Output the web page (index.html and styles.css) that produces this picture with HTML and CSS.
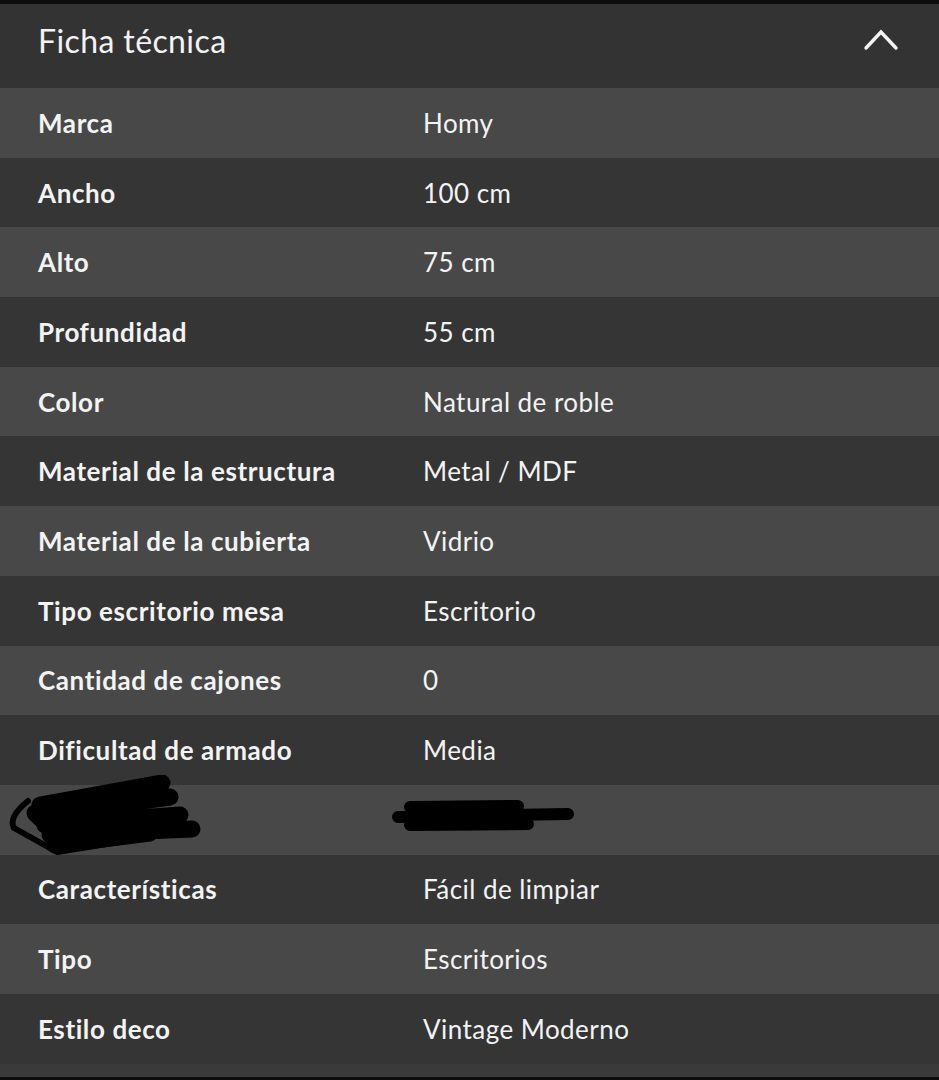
FILE: index.html
```html
<!DOCTYPE html>
<html lang="es">
<head>
<meta charset="utf-8">
<title>Ficha técnica</title>
<link rel="stylesheet" href="styles.css">
</head>
<body>
<div class="page">
  <div class="header">
    <h2 class="title">Ficha técnica</h2>
    <svg class="chev" width="36" height="24" viewBox="0 0 36 24"><path d="M3 21 L18 5 L33 21" fill="none" stroke="#f4f4f4" stroke-width="3.4" stroke-linecap="round" stroke-linejoin="miter"/></svg>
  </div>
  <div class="table">
    <div class="row light"><span class="k">Marca</span><span class="v">Homy</span></div>
    <div class="row dark"><span class="k">Ancho</span><span class="v">100 cm</span></div>
    <div class="row light"><span class="k">Alto</span><span class="v">75 cm</span></div>
    <div class="row dark"><span class="k">Profundidad</span><span class="v">55 cm</span></div>
    <div class="row light"><span class="k">Color</span><span class="v">Natural de roble</span></div>
    <div class="row dark"><span class="k">Material de la estructura</span><span class="v">Metal / MDF</span></div>
    <div class="row light"><span class="k">Material de la cubierta</span><span class="v">Vidrio</span></div>
    <div class="row dark"><span class="k">Tipo escritorio mesa</span><span class="v">Escritorio</span></div>
    <div class="row light"><span class="k">Cantidad de cajones</span><span class="v">0</span></div>
    <div class="row dark"><span class="k">Dificultad de armado</span><span class="v">Media</span></div>
    <div class="row light redacted">
      <svg class="scrib-l" width="210" height="90" viewBox="0 0 210 90"><path d="M40 30 L162 8 M40 40 L170 22 M45 50 L180 40 M50 60 L192 54 M55 70 L150 58 M35 38 L60 62" fill="none" stroke="#000" stroke-width="17" stroke-linecap="round"/><path d="M28 26 Q8 42 14 53 L57 77 L150 62" fill="none" stroke="#000" stroke-width="6" stroke-linecap="round" stroke-linejoin="round"/></svg>
      <svg class="scrib-r" width="200" height="40" viewBox="0 0 200 40"><path d="M22 10 L130 9 M10 20 L180 17 M22 28 L140 27" fill="none" stroke="#000" stroke-width="12" stroke-linecap="round"/></svg>
    </div>
    <div class="row dark"><span class="k">Características</span><span class="v">Fácil de limpiar</span></div>
    <div class="row light"><span class="k">Tipo</span><span class="v">Escritorios</span></div>
    <div class="row dark"><span class="k">Estilo deco</span><span class="v">Vintage Moderno</span></div>
  </div>
  <div class="tail"></div>
</div>
</body>
</html>
```
FILE: styles.css
```css
html, body {
  margin: 0;
  padding: 0;
  background: #0c0c0c;
}
.page {
  width: 939px;
  height: 1080px;
  padding-top: 4px;
  box-sizing: border-box;
  font-family: Lato, "Open Sans", sans-serif;
  color: #f3f3f3;
  display: flex;
  flex-direction: column;
}
.header {
  height: 84px;
  background: #333333;
  display: flex;
  align-items: center;
  justify-content: space-between;
  padding: 0 38px 0 38px;
  box-sizing: border-box;
}
.title {
  margin: 0;
  font-weight: 400;
  font-size: 32px;
  letter-spacing: 0.4px;
  padding-bottom: 12px;
}
.chev {
  display: block;
  margin-bottom: 14px;
  margin-right: 2px;
}
.table {
  display: flex;
  flex-direction: column;
}
.row {
  height: 69.7px;
  display: flex;
  align-items: center;
  padding-left: 38px;
  box-sizing: border-box;
  font-size: 26px;
}
.row.light { background: #484848; }
.row.dark { background: #353535; }
.k {
  width: 385px;
  font-weight: 700;
  flex: none;
  letter-spacing: 0.6px;
}
.v {
  font-weight: 400;
  letter-spacing: 0.45px;
}
.redacted { position: relative; }
.scrib-l {
  position: absolute;
  left: 0;
  top: -10px;
}
.scrib-r {
  position: absolute;
  left: 388px;
  top: 12px;
}
.tail {
  flex: 1;
  background: #3a3a3a;
  border-bottom: 3px solid #0c0c0c;
}
```
